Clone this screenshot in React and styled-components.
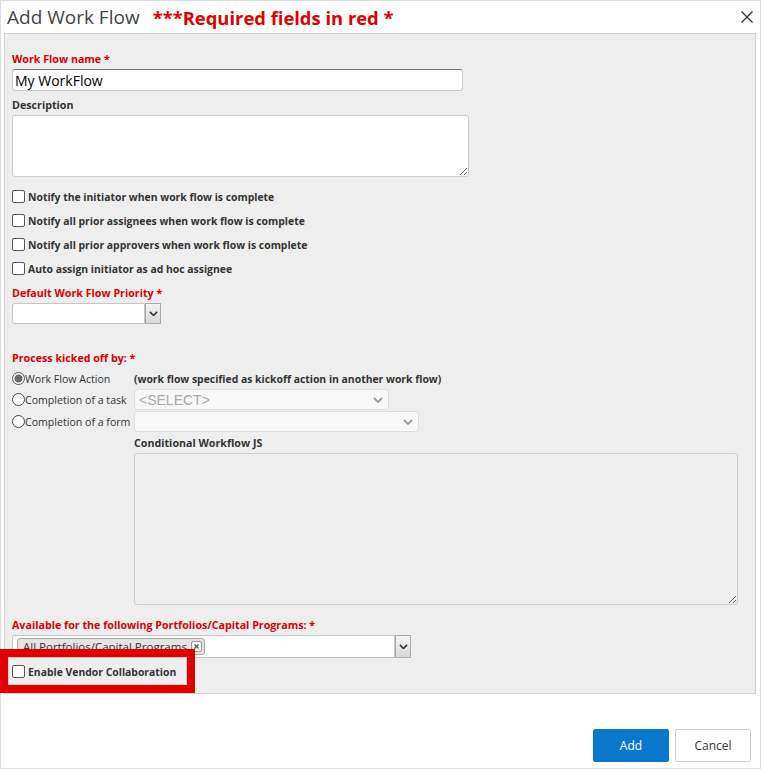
import styled, { createGlobalStyle } from "styled-components";

const Global = createGlobalStyle`
  html, body {
    margin: 0;
    padding: 0;
    background: #fff;
  }
  body {
    font-family: "Open Sans", "Liberation Sans", sans-serif;
    color: #333;
  }
  * {
    box-sizing: border-box;
  }
`;

const Dialog = styled.div`
  width: 761px;
  height: 769px;
  border: 1px solid #dcdcdc;
  background: #fff;
  display: flex;
  flex-direction: column;
`;

const Header = styled.div`
  height: 32px;
  display: flex;
  align-items: center;
  padding: 0 6px 0 6px;
`;

const Title = styled.h1`
  margin: 0 13px 0 0;
  font-size: 19px;
  font-weight: 400;
  color: #444;
`;

const Required = styled.span`
  font-size: 18.4px;
  font-weight: 700;
  color: #e00000;
`;

const CloseButton = styled.button`
  margin-left: auto;
  border: none;
  background: none;
  padding: 0;
  width: 14px;
  height: 14px;
  display: flex;
  cursor: pointer;
`;

const Panel = styled.div`
  margin: 0 4px 0 3px;
  height: 661px;
  border: 1px solid #cfcfcf;
  background: #eeeeee;
  padding: 18px 7px 0 7px;
`;

const Label = styled.label`
  display: block;
  font-size: 10.7px;
  font-weight: 700;
  line-height: 14px;
  color: ${(p) => (p.$required ? "#dd0000" : "#333")};
  margin-top: ${(p) => p.$mt || 0}px;
  margin-bottom: 3px;
`;

const TextInput = styled.input`
  display: block;
  width: 451px;
  height: 22px;
  border: 1px solid #cccccc;
  border-top-color: #777;
  border-radius: 3px;
  padding: 0 2px;
  font-family: "Open Sans", sans-serif;
  font-size: 14px;
  color: #000;
  background: #fff;
  outline: none;
`;

const TextArea = styled.textarea`
  display: block;
  width: ${(p) => p.$w}px;
  height: ${(p) => p.$h}px;
  border: 1px solid #cccccc;
  border-radius: 3px;
  background: ${(p) => (p.$muted ? "#eeeeee" : "#fff")};
  resize: both;
  outline: none;
  font-family: "Open Sans", sans-serif;
`;

const CheckList = styled.div`
  margin-top: ${(p) => p.$mt ?? 8}px;
  margin-bottom: 5px;
`;

const CheckRow = styled.label`
  position: relative;
  display: flex;
  align-items: center;
  gap: 3px;
  height: ${(p) => p.$h || 24}px;
  font-size: 10.4px;
  font-weight: 700;
  color: #333;
`;

const Box = styled.input.attrs({ type: "checkbox" })`
  appearance: none;
  margin: 0 0 2px 0;
  width: 13px;
  height: 13px;
  border: 1px solid #555;
  border-radius: 2px;
  background: #fff;
`;

const PrioritySelect = styled.div`
  display: flex;
  height: 21px;
  width: 149px;
`;

const PriorityField = styled.div`
  width: 133px;
  height: 21px;
  background: #fff;
  border: 1px solid #c5c5c5;
  border-radius: 3px 0 0 3px;
`;

const DropButton = styled.div`
  width: 16px;
  height: ${(p) => p.$h || 21}px;
  border: 1px solid #a9a9a9;
  background: linear-gradient(#f4f4f4, #d8d8d8);
  display: flex;
  align-items: center;
  justify-content: center;
`;

const KickoffGrid = styled.div`
  margin-top: 4px;
  display: grid;
  grid-template-columns: 122px auto;
  grid-template-rows: 19px 21px 21px auto;
  row-gap: 1px;
  align-items: center;
`;

const RadioLabel = styled.label`
  display: flex;
  align-items: center;
  font-size: 10.6px;
  color: #333;
  white-space: nowrap;
`;

const Radio = styled.input.attrs({ type: "radio" })`
  appearance: none;
  margin: 0;
  width: 13px;
  height: 13px;
  border: 1px solid #444;
  border-radius: 50%;
  background: #fff;
  &:checked {
    background: radial-gradient(circle, #6b6b6b 0 3.5px, #fff 4.5px);
    border-color: #555;
  }
`;

const Hint = styled.span`
  font-size: 10.4px;
  font-weight: 700;
  color: #333;
`;

const MutedSelect = styled.div`
  width: ${(p) => p.$w}px;
  height: 21px;
  background: #f8f8f8;
  border: 1px solid #dedede;
  border-radius: 3px;
  display: flex;
  align-items: center;
  justify-content: space-between;
  padding: 0 5px 0 4px;
  font-family: "Liberation Sans", Arial, sans-serif;
  font-size: 14px;
  color: #a8a8a8;
`;

const ConditionalBlock = styled.div`
  grid-column: 2;
  padding-top: 3px;
`;

const MultiSelect = styled.div`
  display: flex;
  width: 399px;
  height: 23px;
`;

const MultiField = styled.div`
  width: 383px;
  height: 23px;
  background: #fff;
  border: 1px solid #c5c5c5;
  border-radius: 3px 0 0 3px;
  padding: 2px 4px;
  display: flex;
  align-items: flex-start;
`;

const Tag = styled.span`
  display: inline-flex;
  align-items: center;
  gap: 4px;
  height: 17px;
  padding: 0 2px 0 5px;
  background: #e4e4e4;
  border: 1px solid #aaa;
  border-radius: 3px;
  font-size: 11.5px;
  color: #333;
`;

const TagClose = styled.span`
  width: 11px;
  height: 11px;
  border: 1px solid #999;
  border-radius: 2px;
  background: #f4f4f4;
  display: flex;
  align-items: center;
  justify-content: center;
`;

const Highlight = styled.div`
  position: absolute;
  left: -12px;
  top: -13px;
  width: 195px;
  height: 44px;
  border: 8px solid #e00000;
  box-shadow: inset 0 0 0 1px #cfcfcf;
  pointer-events: none;
`;

const Footer = styled.div`
  flex: 1;
  display: flex;
  justify-content: flex-end;
  align-items: flex-end;
  gap: 6px;
  padding: 0 9px 6px 0;
`;

const Button = styled.button`
  width: 76px;
  height: 33px;
  border-radius: 2px;
  font-family: "Open Sans", sans-serif;
  font-size: 12px;
  cursor: pointer;
  border: 1px solid ${(p) => (p.$primary ? "#0a78cc" : "#cfcfcf")};
  background: ${(p) => (p.$primary ? "#0a78cc" : "#fff")};
  color: ${(p) => (p.$primary ? "#fff" : "#333")};
`;

const Chevron = ({ color = "#333", size = 9 }) => (
  <svg width={size} height={size * 0.6} viewBox="0 0 10 6">
    <path d="M1 1 L5 5 L9 1" fill="none" stroke={color} strokeWidth="1.8" />
  </svg>
);

const App = () => {
  return (
    <>
      <Global />
      <Dialog>
        <Header>
          <Title>Add Work Flow</Title>
          <Required>***Required fields in red *</Required>
          <CloseButton aria-label="Close">
            <svg width="14" height="14" viewBox="0 0 14 14">
              <path d="M1.5 1.5 L12.5 12.5 M12.5 1.5 L1.5 12.5" stroke="#333" strokeWidth="1.3" />
            </svg>
          </CloseButton>
        </Header>

        <Panel>
          <Label $required>Work Flow name *</Label>
          <TextInput defaultValue="My WorkFlow" />
          <Label $mt={7}>Description</Label>
          <TextArea $w={457} $h={62} />

          <CheckList>
            <CheckRow><Box />Notify the initiator when work flow is complete</CheckRow>
            <CheckRow><Box />Notify all prior assignees when work flow is complete</CheckRow>
            <CheckRow><Box />Notify all prior approvers when work flow is complete</CheckRow>
            <CheckRow><Box />Auto assign initiator as ad hoc assignee</CheckRow>
          </CheckList>

          <Label $required>Default Work Flow Priority *</Label>
          <PrioritySelect>
            <PriorityField />
            <DropButton><Chevron /></DropButton>
          </PrioritySelect>

          <Label $required $mt={27}>Process kicked off by: *</Label>
          <KickoffGrid>
            <RadioLabel><Radio name="kick" defaultChecked />Work Flow Action</RadioLabel>
            <Hint>(work flow specified as kickoff action in another work flow)</Hint>
            <RadioLabel><Radio name="kick" />Completion of a task</RadioLabel>
            <MutedSelect $w={255}>
              &lt;SELECT&gt;
              <Chevron color="#9a9a9a" size={10} />
            </MutedSelect>
            <RadioLabel><Radio name="kick" />Completion of a form</RadioLabel>
            <MutedSelect $w={285}>
              <span />
              <Chevron color="#9a9a9a" size={10} />
            </MutedSelect>
            <ConditionalBlock>
              <Label>Conditional Workflow JS</Label>
              <TextArea $w={604} $h={152} $muted />
            </ConditionalBlock>
          </KickoffGrid>

          <Label $required $mt={13}>Available for the following Portfolios/Capital Programs: *</Label>
          <MultiSelect>
            <MultiField>
              <Tag>
                All Portfolios/Capital Programs
                <TagClose>
                  <svg width="5" height="5" viewBox="0 0 5 5">
                    <path d="M0.5 0.5 L4.5 4.5 M4.5 0.5 L0.5 4.5" stroke="#555" strokeWidth="1.3" />
                  </svg>
                </TagClose>
              </Tag>
            </MultiField>
            <DropButton $h={23}><Chevron /></DropButton>
          </MultiSelect>

          <CheckList $mt={4}>
            <CheckRow $h={20}>
              <Box />
              Enable Vendor Collaboration
              <Highlight />
            </CheckRow>
          </CheckList>
        </Panel>

        <Footer>
          <Button $primary>Add</Button>
          <Button>Cancel</Button>
        </Footer>
      </Dialog>
    </>
  );
};

export default App;
